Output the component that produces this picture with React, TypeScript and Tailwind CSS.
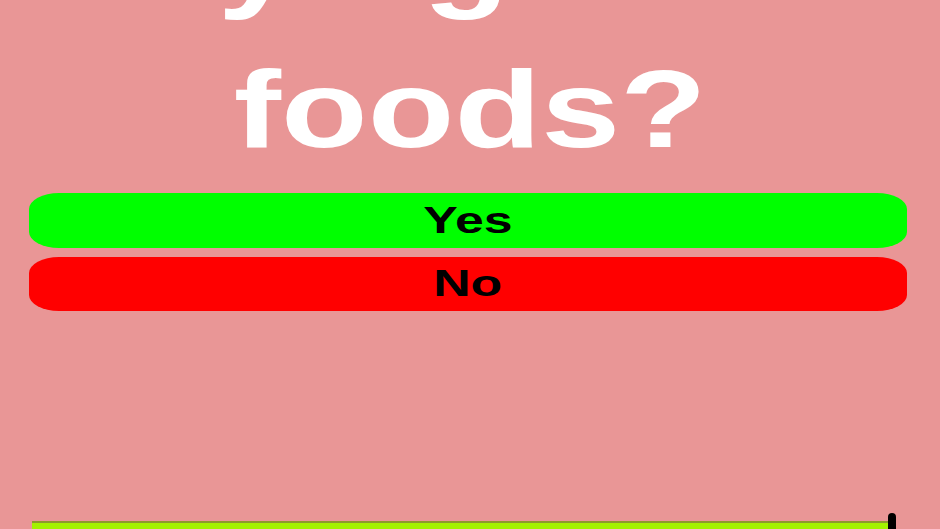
export default function App() {
  const lines = ["Do you like", "trying new", "foods?"];

  return (
    <div
      className="h-[529px] w-[940px] overflow-hidden bg-[#e99696]"
      style={{ fontFamily: '"Liberation Sans", Arial, sans-serif' }}
    >
      <h1 className="mt-[-266px] text-center text-[110px] font-bold leading-[150px] text-white">
        {lines.map((line) => (
          <div key={line}>
            <span className="inline-block scale-x-[1.29]">{line}</span>
          </div>
        ))}
      </h1>

      <button className="mt-[9px] ml-[29px] flex h-[55px] w-[878px] items-center justify-center rounded-[30px/16px] bg-[#00ff00] text-[37px] font-bold text-black">
        <span className="inline-block scale-x-[1.4]">Yes</span>
      </button>
      <button className="mt-[9px] ml-[29px] flex h-[54px] w-[878px] items-center justify-center rounded-[30px/16px] bg-[#ff0000] text-[37px] font-bold text-black">
        <span className="inline-block scale-x-[1.4]">No</span>
      </button>

      <div className="relative mt-[210px] ml-[32px] h-[20px] w-[857px] border-t-2 border-[#8d9a2c] bg-[#a3f200]">
        <div className="absolute right-[-7px] top-[-10px] h-[24px] w-[8px] rounded-t-full bg-black" />
      </div>
    </div>
  );
}
